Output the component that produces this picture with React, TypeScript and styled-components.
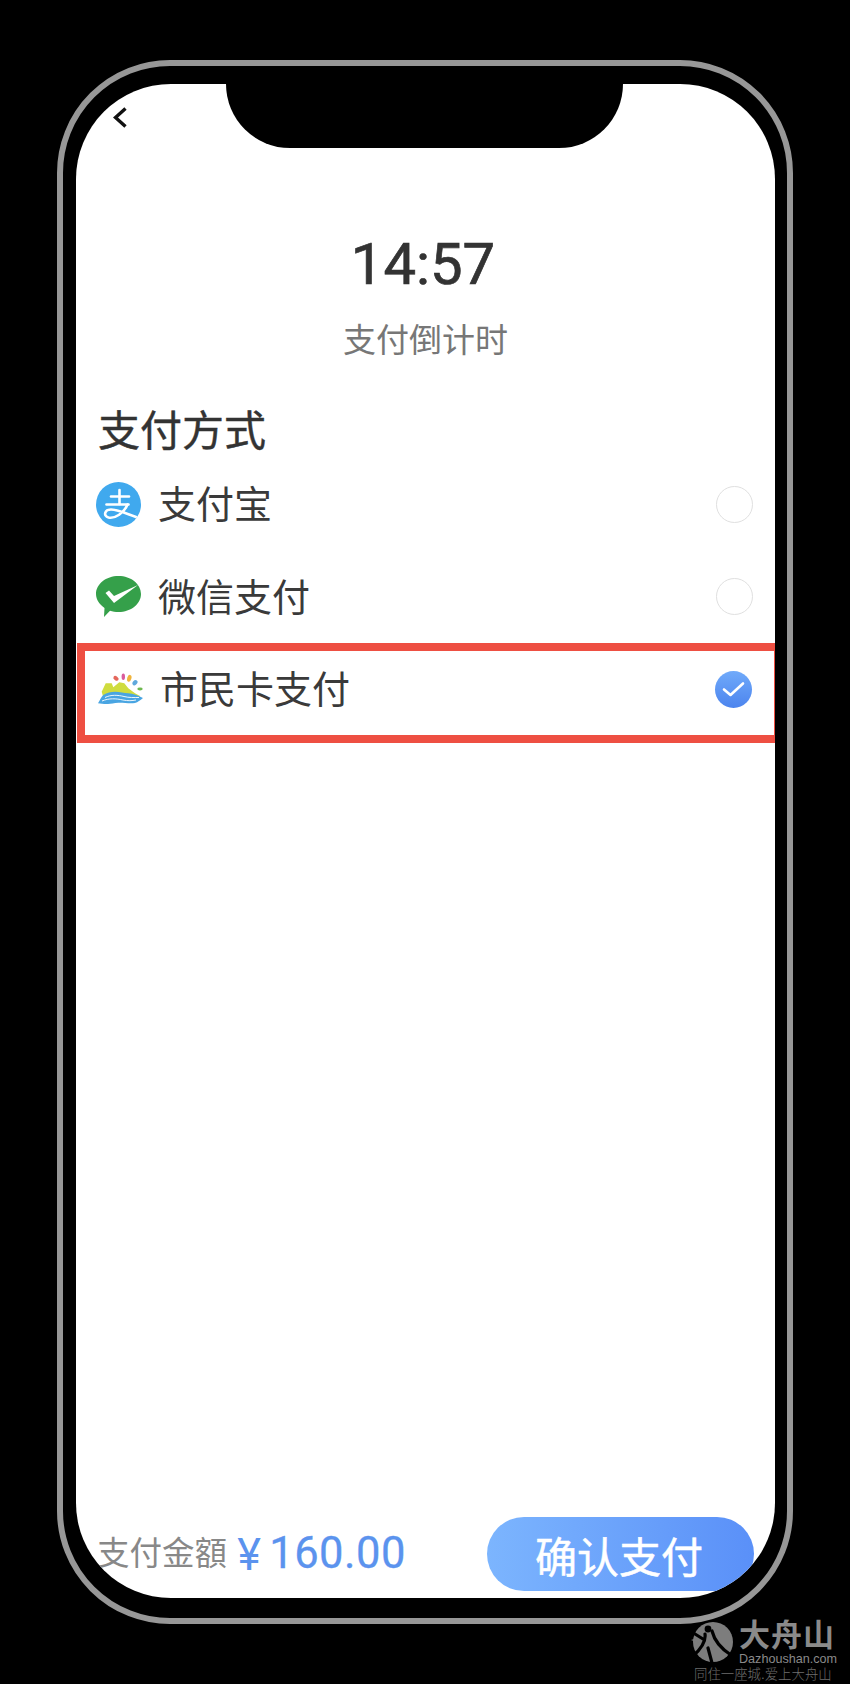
import styled, { createGlobalStyle } from "styled-components";

const CJK = `Inter, "Noto Sans CJK SC", "Noto Sans", sans-serif`;

const GlobalStyle = createGlobalStyle`
  html, body {
    margin: 0;
    padding: 0;
    background: #000;
  }
  * {
    box-sizing: border-box;
  }
`;

const methods = [
  { id: "alipay", label: "支付宝", selected: false },
  { id: "wechat", label: "微信支付", selected: false },
  { id: "citizen", label: "市民卡支付", selected: true },
];

const AlipayIcon = () => (
  <svg width="45" height="45" viewBox="0 0 45 45">
    <defs>
      <clipPath id="alipayClip">
        <circle cx="22.5" cy="22.5" r="22.5" />
      </clipPath>
    </defs>
    <circle cx="22.5" cy="22.5" r="22.5" fill="#40a9ee" />
    <g clipPath="url(#alipayClip)" fill="none" stroke="#fff" strokeWidth="2.6" strokeLinecap="round">
      <path d="M15 14.5H33" />
      <path d="M23.5 8V22" />
      <path d="M10.5 22.5H32.5" />
      <path d="M31.5 22.5C28 31 19 37 12.5 35.5C7 34 8.5 27.5 15 27.5C23 27.5 33 33 46 37" />
    </g>
  </svg>
);

const WechatIcon = () => (
  <svg width="45" height="41" viewBox="0 0 45 41">
    <path d="M22.5 0C35 0 45 8 45 18C45 28 35 36 22.5 36C19.5 36 16.5 35.500 14 34.700L8 41L8.500 32C3.500 28.500 0 23.500 0 18C0 8 10 0 22.5 0Z" fill="#35a04a" />
    <path d="M9.500 17L13 14.500L18 20L42 9L18 27Z" fill="#fff" />
  </svg>
);

const CitizenIcon = () => (
  <svg width="45" height="33" viewBox="0 0 45 33">
    <path d="M3.700 18.700L7.700 10.300L13.700 10.300L15.300 14.300L21.300 9.300L26.300 10.300L30.300 15.300L37 20.300L42 23L38 27H6Z" fill="#cfdc3e" />
    <path d="M0 30.300C2 27 3 24 5.300 22C9 19.500 13 18.700 17 18.700C22 18.700 26 20 30.300 20.300C35 20.700 40 22.500 45 25C42 27.500 40 29 37 30C32 31 26 29.500 20.300 29.700C16 29.800 13 31 10 31C6 31.200 3 30.500 0 30.300Z" fill="#49a5e2" />
    <g fill="none" stroke="#fff" strokeWidth="0.9">
      <path d="M7 24.500C13 21.500 20 22 26 23.500C31 24.800 36 24.500 41 24.500" />
      <path d="M4 28C11 25 18 25.500 25 27C30 28 34 27.800 38 27" />
    </g>
    <ellipse cx="18" cy="5.300" rx="2.900" ry="2" transform="rotate(35 18 5.300)" fill="#e4675c" />
    <ellipse cx="25.300" cy="3.700" rx="1.700" ry="3.200" fill="#d95c9c" />
    <ellipse cx="31.300" cy="5.300" rx="2.100" ry="3.500" transform="rotate(15 31.300 5.300)" fill="#f0b43c" />
    <ellipse cx="37" cy="9.700" rx="2.200" ry="2.900" transform="rotate(40 37 9.700)" fill="#5fa8dc" />
    <ellipse cx="42" cy="16" rx="2.700" ry="1.400" fill="#6fb84f" />
  </svg>
);

const BackIcon = () => (
  <svg width="14" height="21" viewBox="0 0 14 21">
    <path d="M12.500 1.500L2.500 10.500L12.500 19.500" fill="none" stroke="#111" strokeWidth="3.400" />
  </svg>
);

const CheckIcon = () => (
  <svg width="37" height="37" viewBox="0 0 37 37">
    <path d="M9 18.500L15.500 24L28 12.500" fill="none" stroke="#fff" strokeWidth="2.600" strokeLinecap="round" strokeLinejoin="round" />
  </svg>
);

const WatermarkLogo = () => (
  <svg width="42" height="42" viewBox="0 0 42 42">
    <circle cx="22" cy="21" r="20" fill="#7d7d7d" />
    <path d="M0 19L9 16L8 22Z" fill="#7d7d7d" />
    <circle cx="17" cy="8" r="3.400" fill="#000" />
    <g fill="none" stroke="#000" strokeWidth="3.200" strokeLinecap="round">
      <path d="M14 13C15 20 11 27 2 35" />
      <path d="M21 10C23 18 29 27 40 34" />
      <path d="M4 13L12 18" />
      <path d="M17 27L21 42" />
    </g>
  </svg>
);

const App = () => {
  return (
    <Page>
      <GlobalStyle />
      <PhoneFrame>
        <Screen>
          <Notch />
          <BackButton>
            <BackIcon />
          </BackButton>
          <Timer>14:57</Timer>
          <Caption>支付倒计时</Caption>
          <SectionTitle>支付方式</SectionTitle>
          <MethodList>
            {methods.map(({ id, label, selected }) => (
              <MethodRow key={id} $selected={selected}>
                <MethodIcon>
                  {id === "alipay" && <AlipayIcon />}
                  {id === "wechat" && <WechatIcon />}
                  {id === "citizen" && <CitizenIcon />}
                </MethodIcon>
                <MethodLabel>{label}</MethodLabel>
                <Radio $selected={selected}>{selected ? <CheckIcon /> : null}</Radio>
              </MethodRow>
            ))}
          </MethodList>
          <Footer>
            <AmountLabel>支付金額</AmountLabel>
            <Yen>¥</Yen>
            <Amount>160.00</Amount>
            <ConfirmButton>确认支付</ConfirmButton>
          </Footer>
        </Screen>
      </PhoneFrame>
      <Watermark>
        <WatermarkLogo />
        <WatermarkText>
          <WatermarkName>大舟山</WatermarkName>
          <WatermarkDomain>Dazhoushan.com</WatermarkDomain>
        </WatermarkText>
        <WatermarkSlogan>同住一座城.爱上大舟山</WatermarkSlogan>
      </Watermark>
    </Page>
  );
};

const Page = styled.div`
  position: relative;
  width: 850px;
  height: 1684px;
  padding: 60px 57px;
  background: #000;
  overflow: hidden;
  font-family: ${CJK};
`;

const PhoneFrame = styled.div`
  width: 736px;
  height: 1564px;
  padding: 18px 12px 20px 13px;
  border: 6px solid #979797;
  border-radius: 113px;
  background: #000;
`;

const Screen = styled.div`
  position: relative;
  display: flex;
  flex-direction: column;
  height: 100%;
  background: #fff;
  border-radius: 95px;
  overflow: hidden;
`;

const Notch = styled.div`
  position: absolute;
  top: 0;
  left: 150px;
  width: 397px;
  height: 64px;
  background: #000;
  border-radius: 0 0 64px 64px;
`;

const BackButton = styled.div`
  display: flex;
  height: 21px;
  margin: 23px 0 0 37px;
`;

const Timer = styled.div`
  margin-top: 101px;
  padding-right: 5px;
  font-family: Roboto, sans-serif;
  font-size: 58px;
  font-weight: 400;
  line-height: 70px;
  text-align: center;
  color: #333;
  -webkit-text-stroke: 0.7px #333;
`;

const Caption = styled.div`
  margin-top: 21px;
  font-size: 33px;
  line-height: 40px;
  text-align: center;
  color: #777;
`;

const SectionTitle = styled.div`
  margin: 46px 0 0 22px;
  font-size: 42px;
  font-weight: 400;
  line-height: 50px;
  color: #333;
  -webkit-text-stroke: 0.4px #333;
`;

const MethodList = styled.div`
  display: flex;
  flex-direction: column;
  margin-top: 2px;
`;

const MethodRow = styled.div<{ $selected: boolean }>`
  display: flex;
  align-items: center;
  height: ${({ $selected }) => ($selected ? "100px" : "92.5px")};
  margin-left: ${({ $selected }) => ($selected ? "1px" : "0")};
  padding: ${({ $selected }) => ($selected ? "0 22px 8px 13px" : "0 22px 0 20px")};
  border: ${({ $selected }) => ($selected ? "8px solid #ee4f42" : "none")};
  border-right-width: ${({ $selected }) => ($selected ? "1px" : "0")};
`;

const MethodIcon = styled.div`
  display: flex;
  justify-content: center;
  flex: 0 0 45px;
  margin-right: 17px;
`;

const MethodLabel = styled.div`
  flex: 1;
  font-size: 38px;
  line-height: 46px;
  color: #3a3a3a;
`;

const Radio = styled.div<{ $selected: boolean }>`
  width: 37px;
  height: 37px;
  border-radius: 50%;
  border: ${({ $selected }) => ($selected ? "none" : "1.5px solid #e0e0e0")};
  background: ${({ $selected }) =>
    $selected ? "linear-gradient(180deg, #70aafa, #4c84ee)" : "#fff"};
`;

const Footer = styled.div`
  display: flex;
  align-items: center;
  margin-top: auto;
  padding: 0 21px 7px 21px;
`;

const AmountLabel = styled.div`
  font-size: 32.500px;
  line-height: 40px;
  color: #888;
`;

const Yen = styled.div`
  margin-left: 10px;
  font-size: 44px;
  font-weight: 400;
  color: #5b93ee;
`;

const Amount = styled.div`
  margin-left: 8px;
  font-family: Roboto, sans-serif;
  font-size: 43.500px;
  line-height: 50px;
  letter-spacing: 0.5px;
  color: #5b93ee;
  -webkit-text-stroke: 0.3px #5b93ee;
`;

const ConfirmButton = styled.div`
  display: flex;
  align-items: center;
  justify-content: center;
  width: 267px;
  height: 74px;
  margin-left: auto;
  padding-right: 3px;
  border-radius: 37px;
  background: linear-gradient(90deg, #7cb5fe, #5a90f8);
  font-size: 42px;
  font-weight: 400;
  color: #fff;
  -webkit-text-stroke: 0.5px #fff;
`;

const Watermark = styled.div`
  position: absolute;
  left: 691px;
  top: 1621px;
  width: 145px;
  color: #8a8a8a;
`;

const WatermarkText = styled.div`
  position: absolute;
  left: 48px;
  top: -2px;
  width: 96px;
`;

const WatermarkName = styled.div`
  font-size: 31px;
  font-weight: 700;
  line-height: 32px;
  letter-spacing: 1px;
  color: #8a8a8a;
`;

const WatermarkDomain = styled.div`
  font-family: "Liberation Sans", sans-serif;
  font-size: 12.600px;
  line-height: 16px;
  white-space: nowrap;
  color: #8a8a8a;
`;

const WatermarkSlogan = styled.div`
  margin-left: 3px;
  font-size: 13.400px;
  font-weight: 300;
  line-height: 15px;
  white-space: nowrap;
  color: #6e6e6e;
`;

export default App;
